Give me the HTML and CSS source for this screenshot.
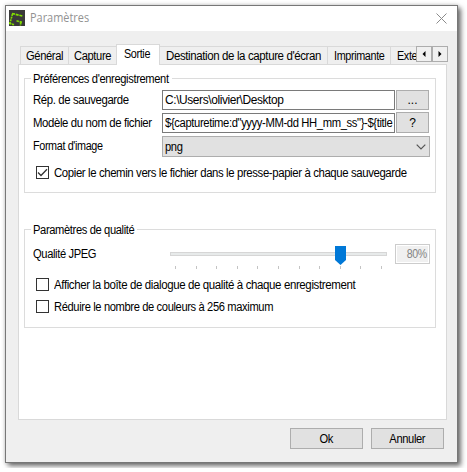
FILE: index.html
```html
<!DOCTYPE html>
<html lang="fr">
<head>
<meta charset="utf-8">
<title>Paramètres</title>
<link rel="stylesheet" href="styles.css">
</head>
<body>
<div class="window">
  <header class="titlebar">
    <svg class="logo" width="16" height="16" viewBox="0 0 16 16"><rect width="16" height="16" fill="#3a3a3a"/><path d="M3 3.500L13.500 6" stroke="#82e000" stroke-width="1.700" stroke-dasharray="3 .8" fill="none"/><path d="M3.500 4L1 13" stroke="#82e000" stroke-width="1.600" stroke-dasharray="2 .8" fill="none"/><path d="M0 13l5 1.800M7.500 10.800l5.500 1.500M12 12l-.8 3.500" stroke="#82e000" stroke-width="1.700" stroke-dasharray="2.500 .7" fill="none"/></svg>
    <span class="title">Paramètres</span>
    <svg class="close" width="11" height="11" viewBox="0 0 11 11"><path d="M.5.5l10 10M10.500.5l-10 10" stroke="#8b8b8b" fill="none"/></svg>
  </header>
  <nav class="tabs">
    <div class="tab general"><span class="t-general">Général</span></div>
    <div class="tab capture"><span class="t-capture">Capture</span></div>
    <div class="tab active"><span class="t-sortie">Sortie</span></div>
    <div class="tab destination"><span class="t-destination">Destination de la capture d'écran</span></div>
    <div class="tab printer"><span class="t-printer">Imprimante</span></div>
    <div class="tab external"><span class="t-external">Exte</span></div>
    <div class="scroller"><svg width="4" height="6" viewBox="0 0 4 6"><path d="M3.500 0v6L.5 3z"/></svg></div>
    <div class="scroller next"><svg width="4" height="6" viewBox="0 0 4 6"><path d="M.5 0v6l3-3z"/></svg></div>
  </nav>
  <main class="panel">
    <section class="group saving">
      <h2 class="h-prefs"><span class="t-prefs">Préférences d'enregistrement</span></h2>
      <div class="row r1"><label><span class="t-dir">Rép. de sauvegarde</span></label><div class="input"><span class="t-path">C:\Users\olivier\Desktop</span></div><div class="button small"><span>...</span></div></div>
      <div class="row r2"><label><span class="t-model">Modèle du nom de fichier</span></label><div class="input"><span class="t-pattern">${capturetime:d"yyyy-MM-dd HH_mm_ss"}-${title</span></div><div class="button small help"><span>?</span></div></div>
      <div class="row r3"><label><span class="t-format">Format d'image</span></label><div class="select"><span class="t-png">png</span><svg width="10" height="6" viewBox="0 0 10 6"><path d="M.7.7L5 5 9.300.7" stroke="#555" stroke-width="1.2" fill="none"/></svg></div></div>
      <div class="check c1"><i><svg width="11" height="11" viewBox="0 0 11 11"><path d="M1 5.500l3 3L10 2.300" stroke="#333" stroke-width="1.300" fill="none"/></svg></i><span class="t-copy">Copier le chemin vers le fichier dans le presse-papier à chaque sauvegarde</span></div>
    </section>
    <section class="group quality">
      <h2 class="h-quality"><span class="t-quality">Paramètres de qualité</span></h2>
      <div class="row r4"><label><span class="t-jpeg">Qualité JPEG</span></label>
        <svg class="slider" width="217" height="26" viewBox="0 0 217 26"><rect x=".5" y="8.500" width="216" height="3" fill="#e7eaea" stroke="#d6d6d6"/><path d="M5.500 22v3M26.500 22v3M46.500 22v3M67.500 22v3M87.500 22v3M108.500 22v3M129.500 22v3M149.500 22v3M170.500 22v3M190.500 22v3M211.500 22v3" stroke="#c4c4c4"/><path d="M165 2h11v14l-5.500 5-5.500-5z" fill="#0078d7"/></svg>
        <div class="percent"><span class="t-percent">80%</span></div></div>
      <div class="check c2"><i></i><span class="t-show">Afficher la boîte de dialogue de qualité à chaque enregistrement</span></div>
      <div class="check c3"><i></i><span class="t-reduce">Réduire le nombre de couleurs à 256 maximum</span></div>
    </section>
  </main>
  <footer class="actions">
    <div class="button"><span class="t-ok">Ok</span></div>
    <div class="button"><span class="t-cancel">Annuler</span></div>
  </footer>
</div>
</body>
</html>
```
FILE: styles.css
```css
* { box-sizing: border-box; }
body { margin: 0; padding: 5px; background: #fff; font: 12px/14px "Liberation Sans", Arial, sans-serif; color: #000; letter-spacing: -0.4px; overflow: hidden; }
svg { display: block; flex: none; }
span { display: inline-block; white-space: pre; flex: none; transform-origin: 0 50%; }
.window { width: 453px; height: 458px; border: 1px solid #777; background: #efefef; box-shadow: 3px 3px 5px rgba(0,0,0,.55), 0 0 4px rgba(0,0,0,.2); }
.titlebar { height: 25px; background: #fff; display: flex; padding: 4px 10px 0 3px; }
.title { font: 12px/16px "Open Sans", sans-serif; color: #929292; margin-left: 5px; letter-spacing: 0; transform: scaleX(.91); }
.close { margin: 3px 0 0 auto; }
.tabs { display: flex; align-items: flex-start; height: 33px; padding: 15px 0 0 14px; }
.tab { height: 18px; border: 1px solid #d9d9d9; border-width: 1px 0 0 1px; padding: 2px 0 0 5px; overflow: hidden; flex: none; }
.general { width: 48px; }
.capture { width: 48px; }
.active { width: 44px; height: 21px; margin: -2px 0 -1px; border-right-width: 1px; background: #fff; padding-left: 7px; position: relative; }
.destination { width: 167px; border-left: 0; padding-left: 6px; }
.printer { width: 63px; padding-left: 6px; }
.external { width: 26px; padding-left: 6px; }
.scroller { width: 16px; height: 16px; border: 1px solid #adadad; background: #f0f0f0; display: flex; align-items: center; justify-content: center; flex: none; }
.panel { width: 429px; height: 356px; margin-left: 12px; border: 1px solid #d9d9d9; background: #fff; padding: 13px 0 0 5px; }
.group { width: 412px; border: 1px solid #dcdcdc; }
.saving { height: 115px; }
.quality { height: 99px; margin-top: 36px; }
h2 { font: inherit; margin: -7px 0 0 6px; padding-left: 2px; background: #fff; height: 14px; }
.h-prefs { width: 141px; }
.h-quality { width: 106px; }
.row { display: flex; height: 20px; margin-left: 8px; }
label { width: 129px; padding: 3px 0 0; flex: none; }
.r1 { margin-top: 4px; }
.r2 { margin-top: 3px; }
.r3 { margin-top: 3px; height: 21px; }
.input { width: 233px; height: 20px; border: 1px solid #7a7a7a; padding: 2px 2px 0; overflow: hidden; }
.button { border: 1px solid #adadad; background: #e1e1e1; display: flex; align-items: center; justify-content: center; width: 73px; height: 21px; }
.button span { transform-origin: 50% 50%; }
.small { width: 33px; height: 20px; margin-left: 1px; letter-spacing: 0; }
.help { height: 21px; margin-top: -1px; }
.select { width: 268px; height: 21px; border: 1px solid #adadad; background: #e1e1e1; padding: 0 3px 0 2px; display: flex; align-items: center; justify-content: space-between; }
.check { display: flex; align-items: center; height: 13px; margin-left: 11px; }
.check i { width: 13px; height: 13px; border: 1px solid #333; background: #fff; margin-right: 5px; flex: none; }
.c1 { margin-top: 9px; }
.r4 { margin-top: 7px; }
.slider { margin-left: 8px; }
.percent { width: 35px; height: 20px; margin-left: 8px; border: 1px solid #ccc; background: #f0f0f0; box-shadow: inset 0 0 0 1px #fff; color: #838383; padding: 2px 2px 0 0; text-align: right; }
.c2 { margin-top: 14px; }
.c3 { margin-top: 9px; }
.actions { display: flex; justify-content: flex-end; gap: 8px; padding: 8px 13px 0 0; }

/* Condensed label widths */
.t-general, .t-capture, .t-png, .t-reduce, .t-ok, .t-cancel { transform: scaleX(.93); }
.t-sortie, .t-printer, .t-external, .t-format { transform: scaleX(.9); }
.t-destination, .t-show { transform: scaleX(.958); }
.t-prefs, .t-quality, .t-jpeg { transform: scaleX(.93); }
.t-dir, .t-model, .t-copy { transform: scaleX(.948); }
.t-path { transform: scaleX(.995); }
.t-pattern { transform: scaleX(.937); }
.t-percent { transform: scaleX(.88); transform-origin: 100% 50%; }
```
